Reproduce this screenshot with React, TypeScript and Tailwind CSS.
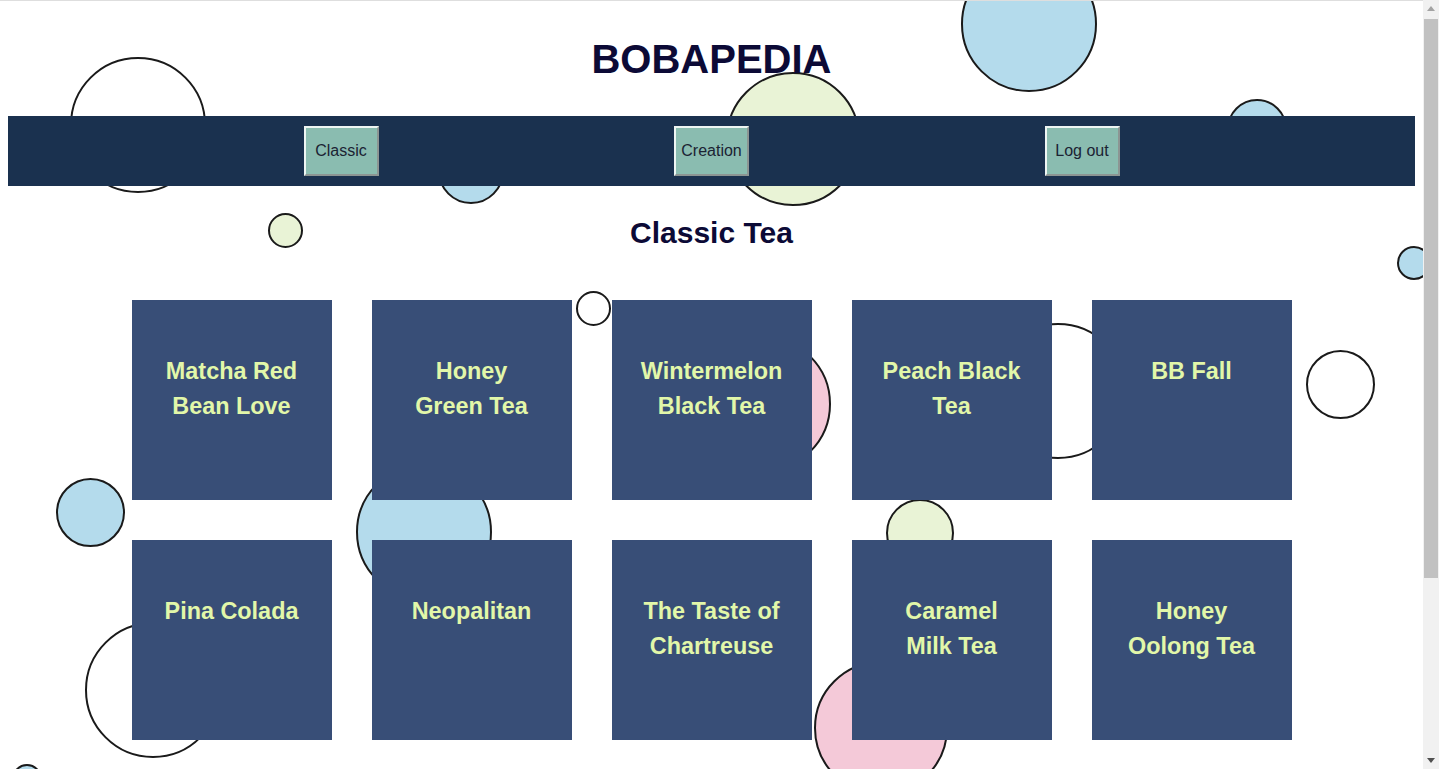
import React from "react";

type Bubble = { x: number; y: number; r: number; c: string };

const BLUE = "#b4dbec";
const GREEN = "#e9f3d6";
const PINK = "#f4c9d8";
const WHITE = "#ffffff";

const bubbles: Bubble[] = [
  { x: 137.5, y: 125, r: 68, c: WHITE },
  { x: 471, y: 171, r: 33, c: BLUE },
  { x: 285.5, y: 230.5, r: 17.5, c: GREEN },
  { x: 792.5, y: 139, r: 67, c: GREEN },
  { x: 1029, y: 24, r: 68, c: BLUE },
  { x: 1257, y: 129, r: 30, c: BLUE },
  { x: 1414, y: 263, r: 17, c: BLUE },
  { x: 1340.5, y: 384.5, r: 34.5, c: WHITE },
  { x: 593, y: 308.5, r: 17.5, c: WHITE },
  { x: 763, y: 404, r: 68, c: PINK },
  { x: 1058, y: 391, r: 68, c: WHITE },
  { x: 920, y: 533, r: 34, c: GREEN },
  { x: 424, y: 532, r: 68, c: BLUE },
  { x: 90.5, y: 512, r: 34.5, c: BLUE },
  { x: 153, y: 690, r: 68, c: WHITE },
  { x: 881, y: 728, r: 67, c: PINK },
  { x: 26.5, y: 779, r: 15, c: BLUE },
];

const teas: string[][] = [
  ["Matcha Red", "Bean Love"],
  ["Honey", "Green Tea"],
  ["Wintermelon", "Black Tea"],
  ["Peach Black", "Tea"],
  ["BB Fall"],
  ["Pina Colada"],
  ["Neopalitan"],
  ["The Taste of", "Chartreuse"],
  ["Caramel", "Milk Tea"],
  ["Honey", "Oolong Tea"],
];

function NavButton({ label }: { label: string }) {
  return (
    <button className="w-[75px] h-[50px] bg-[#8abcb0] border-2 border-t-[#eef5f3] border-l-[#eef5f3] border-b-[#8c9593] border-r-[#8c9593] text-[16px] text-[#1b2333] flex items-center justify-center">
      {label}
    </button>
  );
}

export default function App() {
  return (
    <div
      className="flex w-[1439px] h-[769px] overflow-hidden bg-white"
      style={{ fontFamily: '"Liberation Sans", Arial, sans-serif' }}
    >
      <div className="relative w-[1423px] h-[769px] overflow-hidden bg-white shrink-0">
        {bubbles.map((b, i) => (
          <div
            key={i}
            className="absolute rounded-full border-2 border-[#1a1a1a]"
            style={{
              left: b.x - b.r,
              top: b.y - b.r,
              width: b.r * 2,
              height: b.r * 2,
              backgroundColor: b.c,
            }}
          />
        ))}
        <div className="relative h-px bg-[#dedede]" />
        <div className="relative px-2">
          <h1 className="mt-[35px] text-center text-[40px] leading-[46px] font-bold text-[#0c0a36]">
            BOBAPEDIA
          </h1>
          <nav className="mt-[34px] h-[70px] bg-[#1a314f] flex items-center justify-evenly">
            <NavButton label="Classic" />
            <NavButton label="Creation" />
            <NavButton label="Log out" />
          </nav>
          <h2 className="mt-[30px] text-center text-[30px] leading-[34px] font-bold text-[#0c0a36]">
            Classic Tea
          </h2>
          <div className="mt-[50px] grid grid-cols-[repeat(5,200px)] gap-10 justify-center">
            {teas.map((lines, i) => (
              <div
                key={i}
                className="w-[200px] h-[200px] bg-[#384e77] pt-[54px] text-center text-[23.4px] leading-[35px] font-bold text-[#e2f7a9]"
              >
                {lines.map((l, j) => (
                  <div key={j}>{l}</div>
                ))}
              </div>
            ))}
          </div>
        </div>
      </div>
      <div className="w-[16px] h-[769px] bg-[#f1f1f1] flex flex-col shrink-0">
        <div className="h-[17px] flex items-center justify-center">
          <svg width="8" height="5" viewBox="0 0 8 5">
            <path d="M0 5 L4 0 L8 5 Z" fill="#a3a3a3" />
          </svg>
        </div>
        <div className="mt-[2px] ml-px w-[14px] h-[559px] bg-[#c1c1c1]" />
        <div className="flex-1" />
        <div className="h-[17px] flex items-center justify-center">
          <svg width="8" height="5" viewBox="0 0 8 5">
            <path d="M0 0 L8 0 L4 5 Z" fill="#505050" />
          </svg>
        </div>
      </div>
    </div>
  );
}
